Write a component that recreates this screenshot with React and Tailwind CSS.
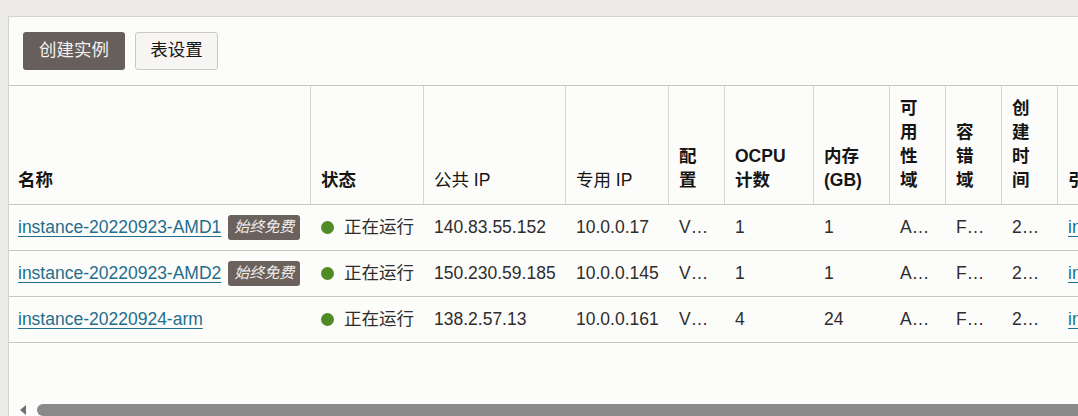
import React from "react";

const cols = "grid-cols-[302px_113px_142px_103px_56px_89px_76px_56px_56px_56px_160px]";

function Head({ children, bold = true, last = false }) {
  return (
    <div
      className={`flex flex-col justify-end pl-[10px] pr-1 pt-[10px] pb-[12px] leading-[24px] text-[#161513] ${bold ? "font-bold" : "font-normal"} ${last ? "" : "border-r border-[#d6d5d3]"}`}
    >
      {children}
    </div>
  );
}

function Cell({ children, first = false }) {
  return (
    <div className={`flex items-center ${first ? "pl-[9px]" : "pl-[10px]"} whitespace-nowrap overflow-hidden`}>
      {children}
    </div>
  );
}

const rows = [
  { name: "instance-20220923-AMD1", free: true, pub: "140.83.55.152", priv: "10.0.0.17", ocpu: "1", mem: "1" },
  { name: "instance-20220923-AMD2", free: true, pub: "150.230.59.185", priv: "10.0.0.145", ocpu: "1", mem: "1" },
  { name: "instance-20220924-arm", free: false, pub: "138.2.57.13", priv: "10.0.0.161", ocpu: "4", mem: "24" },
];

export default function App() {
  return (
    <div
      className="w-[1078px] h-[416px] overflow-hidden bg-[#edebe8] pt-4 pl-2 text-[17.5px] text-[#2e2d2b]"
      style={{ fontFamily: '"Liberation Sans", "Noto Sans CJK SC", sans-serif' }}
    >
      <div className="w-[1200px] h-[420px] bg-[#fcfcfb] border-l border-t border-[#d3d2cf] flex flex-col">
        <div className="flex gap-[10px] pl-[14px] pt-[15px] pb-[15px]">
          <button className="h-[38px] w-[102px] rounded-[3px] bg-[#675f5b] text-[#f3f1ef] leading-none">创建实例</button>
          <button className="h-[38px] w-[83px] rounded-[3px] bg-[#f6f5f3] border border-[#cbc9c6] text-[#161513] leading-none">表设置</button>
        </div>
        <div className={`grid ${cols} border-t border-b border-[#c8c7c5]`}>
          <Head>
            <span className="-ml-px">名称</span>
          </Head>
          <Head>状态</Head>
          <Head bold={false}>公共 IP</Head>
          <Head bold={false}>专用 IP</Head>
          <Head>配<br />置</Head>
          <Head>OCPU<br />计数</Head>
          <Head>内存<br />(GB)</Head>
          <Head>可<br />用<br />性<br />域</Head>
          <Head>容<br />错<br />域</Head>
          <Head>创<br />建<br />时<br />间</Head>
          <Head last>引</Head>
        </div>
        {rows.map((r) => (
          <div key={r.name} className={`grid ${cols} h-[46px] border-b border-[#c8c7c5]`}>
            <Cell first>
              <a href="#" className="text-[#1f6e8b] underline underline-offset-[3px] decoration-1">{r.name}</a>
              {r.free && (
                <span className="ml-[7px] h-[25px] w-[72px] justify-center flex items-center rounded-[3px] bg-[#6b625e] text-[#f1efed] text-[15px] italic">始终免费</span>
              )}
            </Cell>
            <Cell>
              <span className="w-[13px] h-[13px] rounded-full bg-[#4f8a25] mr-[10px]"></span>
              正在运行
            </Cell>
            <Cell>{r.pub}</Cell>
            <Cell>{r.priv}</Cell>
            <Cell>V…</Cell>
            <Cell>{r.ocpu}</Cell>
            <Cell>{r.mem}</Cell>
            <Cell>A…</Cell>
            <Cell>F…</Cell>
            <Cell>2…</Cell>
            <Cell>
              <a href="#" className="text-[#1f6e8b] underline underline-offset-[3px]">instance</a>
            </Cell>
          </div>
        ))}
        <div className="h-[60px]"></div>
        <div className="flex items-center h-[14px]">
          <svg width="8" height="10" viewBox="0 0 8 10" className="ml-[10px] mr-[10px]">
            <polygon points="7,0 7,10 1,5" fill="#6f6f6f" />
          </svg>
          <div className="flex-1 h-[12px] rounded-l-full bg-[#8a8a8a]"></div>
        </div>
      </div>
    </div>
  );
}
